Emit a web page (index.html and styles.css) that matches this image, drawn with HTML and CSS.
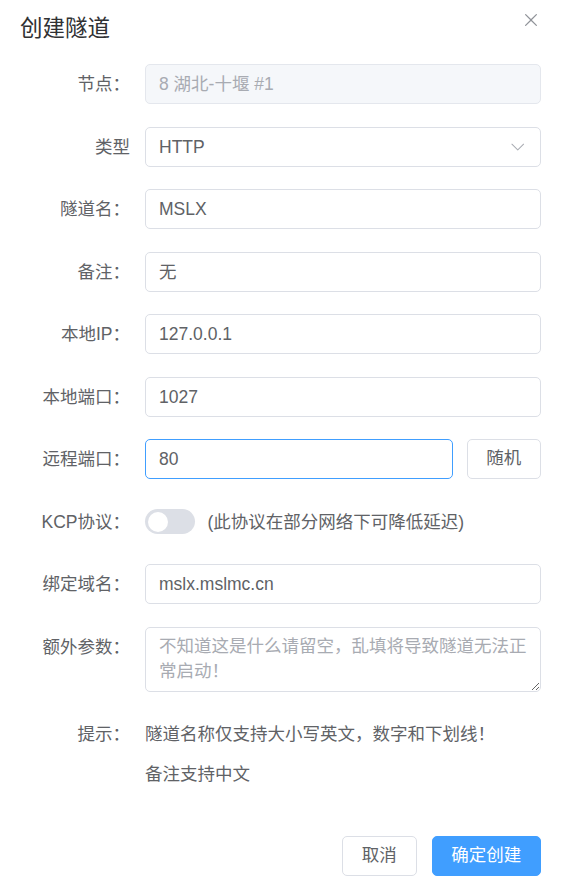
FILE: index.html
```html
<!DOCTYPE html>
<html lang="zh-CN">
<head>
<meta charset="utf-8">
<title>创建隧道</title>
<link rel="stylesheet" href="styles.css">
</head>
<body>
<div class="dialog">
  <header class="dlg-header">
    <span class="dlg-title">创建隧道</span>
    <button class="dlg-close" type="button" aria-label="关闭">
      <svg viewBox="0 0 1024 1024" width="20" height="20"><path fill="currentColor" d="M764.288 214.592 512 466.88 259.712 214.592a31.936 31.936 0 0 0-45.12 45.12L466.752 512 214.528 764.224a31.936 31.936 0 1 0 45.12 45.184L512 557.184l252.288 252.288a31.936 31.936 0 0 0 45.12-45.12L557.12 512.064l252.288-252.352a31.936 31.936 0 1 0-45.12-45.184z"/></svg>
    </button>
  </header>

  <form class="form">
    <div class="item">
      <label class="label">节点：</label>
      <div class="content"><div class="input is-disabled"><input type="text" value="8 湖北-十堰 #1" disabled></div></div>
    </div>
    <div class="item">
      <label class="label">类型</label>
      <div class="content">
        <div class="input select">
          <input type="text" value="HTTP" readonly>
          <svg class="arrow" viewBox="0 0 1024 1024" width="17.5" height="17.5"><path fill="currentColor" d="M831.872 340.864 512 652.672 192.128 340.864a30.592 30.592 0 0 0-42.752 0 29.12 29.12 0 0 0 0 41.6L489.664 714.24a32 32 0 0 0 44.672 0l340.288-331.712a29.12 29.12 0 0 0 0-41.728 30.592 30.592 0 0 0-42.752 0z"/></svg>
        </div>
      </div>
    </div>
    <div class="item">
      <label class="label">隧道名：</label>
      <div class="content"><div class="input"><input type="text" value="MSLX"></div></div>
    </div>
    <div class="item">
      <label class="label">备注：</label>
      <div class="content"><div class="input"><input type="text" value="无"></div></div>
    </div>
    <div class="item">
      <label class="label">本地IP：</label>
      <div class="content"><div class="input"><input type="text" value="127.0.0.1"></div></div>
    </div>
    <div class="item">
      <label class="label">本地端口：</label>
      <div class="content"><div class="input"><input type="text" value="1027"></div></div>
    </div>
    <div class="item">
      <label class="label">远程端口：</label>
      <div class="content row">
        <div class="input is-focus"><input type="text" value="80"></div>
        <button class="btn" type="button">随机</button>
      </div>
    </div>
    <div class="item">
      <label class="label">KCP协议：</label>
      <div class="content">
        <div class="switch">
          <span class="switch-core"><span class="switch-action"></span></span>
          <span class="switch-label">(此协议在部分网络下可降低延迟)</span>
        </div>
      </div>
    </div>
    <div class="item">
      <label class="label">绑定域名：</label>
      <div class="content"><div class="input"><input type="text" value="mslx.mslmc.cn"></div></div>
    </div>
    <div class="item">
      <label class="label">额外参数：</label>
      <div class="content"><textarea class="textarea" placeholder="不知道这是什么请留空，乱填将导致隧道无法正常启动！"></textarea></div>
    </div>
    <div class="item">
      <label class="label">提示：</label>
      <div class="content tip">隧道名称仅支持大小写英文，数字和下划线！<br>备注支持中文</div>
    </div>
  </form>

  <footer class="dlg-footer">
    <button class="btn" type="button">取消</button>
    <button class="btn btn-primary" type="button">确定创建</button>
  </footer>
</div>
</body>
</html>
```

FILE: styles.css
```css
* {
  box-sizing: border-box;
}

html, body {
  margin: 0;
  padding: 0;
  background: #ffffff;
}

body {
  font-family: "Liberation Sans", "Noto Sans CJK SC", sans-serif;
  font-size: 17.5px;
  color: #606266;
}

.dialog {
  width: 561px;
  height: 896px;
  padding: 10px 20px 20px;
  background: #ffffff;
  display: flex;
  flex-direction: column;
}

.dlg-header {
  display: flex;
  justify-content: space-between;
  align-items: flex-start;
  padding-bottom: 20px;
}

.dlg-title {
  padding-top: 4px;
  font-size: 22.5px;
  line-height: 30px;
  color: #303133;
}

.dlg-close {
  width: 20px;
  height: 20px;
  padding: 0;
  margin: 0;
  border: none;
  background: transparent;
  color: #909399;
  display: flex;
}

.form {
  margin: 0;
}

.item {
  display: grid;
  grid-template-columns: 125px 1fr;
  margin-bottom: 22.5px;
}

.label {
  text-align: right;
  padding-right: 15px;
  line-height: 40px;
  color: #606266;
  white-space: nowrap;
}

.content {
  min-width: 0;
  line-height: 40px;
}

.row {
  display: flex;
  gap: 14px;
}

.row .input {
  flex: 1;
}

.input {
  height: 40px;
  display: flex;
  align-items: center;
  padding: 0 13px;
  border: 1px solid #dcdfe6;
  border-radius: 5px;
  background: #ffffff;
}

.input input {
  flex: 1;
  min-width: 0;
  border: none;
  outline: none;
  background: transparent;
  padding: 0;
  margin: 0;
  font: inherit;
  font-size: 17.5px;
  color: #606266;
  height: 38px;
}

.input.is-disabled {
  background: #f5f7fa;
  border-color: #e4e7ed;
}

.input.is-disabled input {
  color: #a8abb2;
  -webkit-text-fill-color: #a8abb2;
}

.input.is-focus {
  border-color: #409eff;
}

.select .arrow {
  color: #a8abb2;
  flex: none;
  margin-right: 1px;
}

.textarea {
  display: block;
  width: 100%;
  height: 65px;
  padding: 6.5px 13px;
  border: 1px solid #dcdfe6;
  border-radius: 5px;
  font: inherit;
  font-size: 17.5px;
  line-height: 25px;
  color: #606266;
  resize: vertical;
  outline: none;
  overflow: hidden;
}

.textarea::placeholder {
  color: #a8abb2;
}

.switch {
  display: inline-flex;
  align-items: center;
  height: 40px;
  vertical-align: top;
}

.switch-core {
  position: relative;
  width: 50px;
  height: 25px;
  border-radius: 12.5px;
  background: #dcdfe6;
  flex: none;
}

.switch-action {
  position: absolute;
  left: 2.5px;
  top: 2.5px;
  width: 20px;
  height: 20px;
  border-radius: 50%;
  background: #ffffff;
}

.switch-label {
  margin-left: 12.5px;
  color: #606266;
}

.tip {
  color: #606266;
}

.dlg-footer {
  margin-top: auto;
  display: flex;
  justify-content: flex-end;
  gap: 15px;
}

.btn {
  height: 40px;
  padding: 0 18.75px;
  border: 1px solid #dcdfe6;
  border-radius: 5px;
  background: #ffffff;
  color: #606266;
  font: inherit;
  font-size: 17.5px;
  line-height: 1;
  cursor: pointer;
  flex: none;
}

.btn-primary {
  background: #409eff;
  border-color: #409eff;
  color: #ffffff;
}
```
